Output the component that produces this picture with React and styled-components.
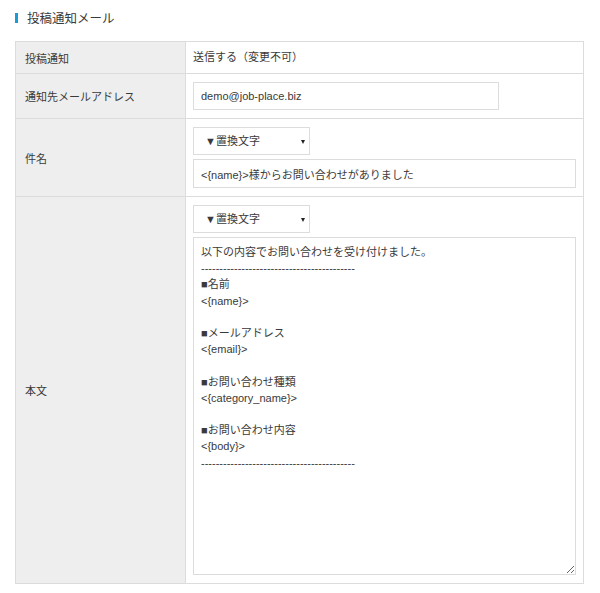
import React from "react";
import styled, { createGlobalStyle } from "styled-components";

const Global = createGlobalStyle`
  html, body { margin: 0; padding: 0; background: #fff; }
  body {
    font-family: "Liberation Sans", Arial, "Noto Sans CJK JP", sans-serif;
    color: #3a3a3a;
  }
`;

const Page = styled.div`
  padding: 8px 16px 10px 15px;
  width: 569px;
`;

const Heading = styled.h2`
  display: flex;
  align-items: center;
  gap: 9px;
  margin: 0 0 14px 0;
  height: 19px;
  font-size: 12.5px;
  font-weight: normal;
  color: #3a3a3a;
  &::before {
    content: "";
    display: block;
    width: 3px;
    height: 10px;
    background: #1a9ad6;
  }
`;

const Grid = styled.div`
  display: grid;
  grid-template-columns: 170px 1fr;
  border-top: 1px solid #dcdcdc;
  border-left: 1px solid #dcdcdc;
  font-size: 11px;
`;

const Label = styled.div`
  display: flex;
  align-items: center;
  padding: 0 9px;
  background: #eeeeee;
  border-right: 1px solid #dcdcdc;
  border-bottom: 1px solid #dcdcdc;
  color: #3a3a3a;
`;

const Cell = styled.div`
  display: flex;
  flex-direction: column;
  gap: 4px;
  padding: 8px 7px 8px 7px;
  border-right: 1px solid #dcdcdc;
  border-bottom: 1px solid #dcdcdc;
  box-sizing: border-box;
  justify-content: center;
`;

const Text = styled.div`
  line-height: 15px;
  color: #3a3a3a;
`;

const Input = styled.input`
  box-sizing: border-box;
  height: ${(p) => p.$h || 28}px;
  width: ${(p) => (p.$w ? `${p.$w}px` : "100%")};
  border: 1px solid #dcdcdc;
  padding: 0 7px;
  font-family: inherit;
  font-size: 11px;
  color: #3a3a3a;
  outline: none;
  background: #fff;
`;

const SelectWrap = styled.div`
  position: relative;
  width: 117px;
  height: 28px;
  &::after {
    content: "";
    position: absolute;
    right: 5px;
    top: 13px;
    border-left: 2px solid transparent;
    border-right: 2px solid transparent;
    border-top: 4px solid #222;
    pointer-events: none;
  }
`;

const Select = styled.select`
  appearance: none;
  -webkit-appearance: none;
  box-sizing: border-box;
  width: 100%;
  height: 100%;
  border: 1px solid #dcdcdc;
  border-radius: 0;
  background: #fff;
  padding: 0 11px;
  font-family: inherit;
  font-size: 11px;
  color: #3a3a3a;
  outline: none;
`;

const Area = styled.textarea`
  box-sizing: border-box;
  width: 100%;
  height: 338px;
  border: 1px solid #dcdcdc;
  padding: 6px 7px;
  font-family: inherit;
  font-size: 11px;
  line-height: 16.2px;
  color: #3a3a3a;
  outline: none;
  resize: vertical;
`;

const dashes = "-".repeat(42);
const body = `以下の内容でお問い合わせを受け付けました。
${dashes}
■名前
<{name}>

■メールアドレス
<{email}>

■お問い合わせ種類
<{category_name}>

■お問い合わせ内容
<{body}>
${dashes}`;

function Replace() {
  return (
    <SelectWrap>
      <Select defaultValue="">
        <option value="">▼置換文字</option>
      </Select>
    </SelectWrap>
  );
}

export default function App() {
  return (
    <>
      <Global />
      <Page>
        <Heading>投稿通知メール</Heading>
        <Grid>
          <Label>投稿通知</Label>
          <Cell>
            <Text>送信する（変更不可）</Text>
          </Cell>

          <Label>通知先メールアドレス</Label>
          <Cell>
            <Input $w={306} defaultValue="demo@job-place.biz" />
          </Cell>

          <Label>件名</Label>
          <Cell>
            <Replace />
            <Input $h={29} defaultValue="<{name}>様からお問い合わせがありました" />
          </Cell>

          <Label>本文</Label>
          <Cell>
            <Replace />
            <Area defaultValue={body} />
          </Cell>
        </Grid>
      </Page>
    </>
  );
}
